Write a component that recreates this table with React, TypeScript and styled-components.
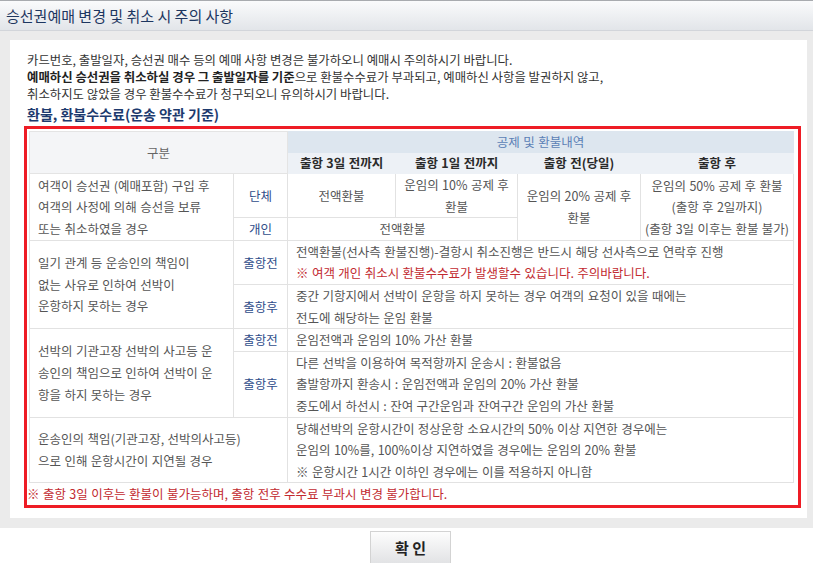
import React from "react";
import styled, { createGlobalStyle } from "styled-components";

const Global = createGlobalStyle`
  html, body { margin: 0; padding: 0; background: #ffffff; }
  body { font-family: "Noto Sans CJK KR", "Noto Sans", sans-serif; }
  * { box-sizing: border-box; }
`;

const Page = styled.div`
  width: 813px;
  height: 563px;
  overflow: hidden;
  display: flex;
  flex-direction: column;
  background: #ffffff;
`;

const Header = styled.header`
  height: 31px;
  flex: none;
  border-top: 1px solid #a8abaf;
  border-bottom: 1px solid #d2d5da;
  background: linear-gradient(#fafbfc, #e2e5e9);
  display: flex;
  align-items: center;
  padding-left: 6px;
`;

const Title = styled.h1`
  margin: 0;
  font-size: 15px;
  font-weight: 400;
  color: #1d3660;
  line-height: 20px;
`;

const Content = styled.div`
  background: #ebebeb;
  padding: 9px 6px 10px 10px;
  flex: none;
`;

const Panel = styled.section`
  background: #ffffff;
  padding: 12px 6px 10px 17px;
`;

const Para = styled.p`
  margin: 0;
  font-size: 12.4px;
  line-height: 17px;
  color: #333333;
`;

const Strong = styled.b`
  font-weight: 700;
  color: #222222;
`;

const SubHeading = styled.h2`
  margin: 2px 0 3px;
  font-size: 14px;
  line-height: 18px;
  font-weight: 700;
  color: #1d3a6e;
`;

const RedBox = styled.div`
  margin-left: -3px;
  border: 3px solid #ee1c25;
  padding: 2px 5px 0 2px;
`;

const Table = styled.table`
  width: 764px;
  border-collapse: collapse;
  table-layout: fixed;
  font-size: 12.5px;
  word-spacing: 0.6px;
  color: #555555;
`;

const Th = styled.th<{ $kind: "gubun" | "group" | "sub" }>`
  padding: 0;
  line-height: 20px;
  font-weight: ${(p) => (p.$kind === "sub" ? 700 : 400)};
  color: ${(p) =>
    p.$kind === "group" ? "#5b7fb6" : p.$kind === "sub" ? "#2a2a2a" : "#666666"};
  background: ${(p) =>
    p.$kind === "group" ? "#dde6ef" : p.$kind === "sub" ? "#edf1f6" : "#f4f5f7"};
  border: 1px solid
    ${(p) => (p.$kind === "gubun" ? "#e4e4e4" : p.$kind === "group" ? "#dde6ef" : "#edf1f6")};
  text-align: center;
`;

const Td = styled.td<{ $align?: "left" | "center" }>`
  padding: ${(p) => (p.$align === "left" ? "0 2px 0 8px" : "0")};
  line-height: 21.6px;
  border: 1px solid #e2e2e2;
  text-align: ${(p) => p.$align ?? "center"};
  vertical-align: middle;
  white-space: nowrap;
`;

const Label = styled.td`
  padding: 0;
  line-height: 21.6px;
  border: 1px solid #e2e2e2;
  text-align: center;
  color: #2f4d8a;
`;

const Red = styled.span`
  color: #c22a30;
`;

const Note = styled.div`
  font-size: 12.5px;
  word-spacing: 0.6px;
  line-height: 22px;
  color: #c22a30;
  margin-left: -2px;
`;

const Footer = styled.footer`
  flex: 1;
  background: #ffffff;
  display: flex;
  justify-content: center;
  padding: 3px 0 0 8px;
`;

const Button = styled.button`
  width: 81px;
  height: 34px;
  border: 1px solid #d3d3d3;
  background: linear-gradient(#fdfdfd, #e1e2e4);
  font-family: "Noto Sans CJK KR", sans-serif;
  font-size: 15px;
  font-weight: 700;
  color: #222222;
  padding: 0 0 2px;
  cursor: pointer;
`;

export default function App() {
  return (
    <>
      <Global />
      <Page>
        <Header>
          <Title>승선권예매 변경 및 취소 시 주의 사항</Title>
        </Header>
        <Content>
          <Panel>
            <Para>카드번호, 출발일자, 승선권 매수 등의 예매 사항 변경은 불가하오니 예매시 주의하시기 바랍니다.</Para>
            <Para>
              <Strong>예매하신 승선권을 취소하실 경우 그 출발일자를 기준</Strong>으로 환불수수료가 부과되고, 예매하신 사항을 발권하지 않고,
            </Para>
            <Para>취소하지도 않았을 경우 환불수수료가 청구되오니 유의하시기 바랍니다.</Para>
            <SubHeading>환불, 환불수수료(운송 약관 기준)</SubHeading>
            <RedBox>
              <Table>
                <colgroup>
                  <col style={{ width: 204 }} />
                  <col style={{ width: 54 }} />
                  <col style={{ width: 108 }} />
                  <col style={{ width: 122 }} />
                  <col style={{ width: 123 }} />
                  <col style={{ width: 153 }} />
                </colgroup>
                <thead>
                  <tr>
                    <Th $kind="gubun" rowSpan={2} colSpan={2}>구분</Th>
                    <Th $kind="group" colSpan={4}>공제 및 환불내역</Th>
                  </tr>
                  <tr>
                    <Th $kind="sub">출항 3일 전까지</Th>
                    <Th $kind="sub">출항 1일 전까지</Th>
                    <Th $kind="sub">출항 전(당일)</Th>
                    <Th $kind="sub">출항 후</Th>
                  </tr>
                </thead>
                <tbody>
                  <tr>
                    <Td $align="left" rowSpan={2}>
                      여객이 승선권 (예매포함) 구입 후<br />
                      여객의 사정에 의해 승선을 보류<br />
                      또는 취소하였을 경우
                    </Td>
                    <Label>단체</Label>
                    <Td>전액환불</Td>
                    <Td>
                      운임의 10% 공제 후<br />
                      환불
                    </Td>
                    <Td rowSpan={2}>
                      운임의 20% 공제 후<br />
                      환불
                    </Td>
                    <Td rowSpan={2}>
                      운임의 50% 공제 후 환불<br />
                      (출항 후 2일까지)<br />
                      (출항 3일 이후는 환불 불가)
                    </Td>
                  </tr>
                  <tr>
                    <Label>개인</Label>
                    <Td colSpan={2}>전액환불</Td>
                  </tr>
                  <tr>
                    <Td $align="left" rowSpan={2}>
                      일기 관계 등 운송인의 책임이<br />
                      없는 사유로 인하여 선박이<br />
                      운항하지 못하는 경우
                    </Td>
                    <Label>출항전</Label>
                    <Td $align="left" colSpan={4}>
                      전액환불(선사측 환불진행)-결항시 취소진행은 반드시 해당 선사측으로 연락후 진행<br />
                      <Red>※ 여객 개인 취소시 환불수수료가 발생할수 있습니다. 주의바랍니다.</Red>
                    </Td>
                  </tr>
                  <tr>
                    <Label>출항후</Label>
                    <Td $align="left" colSpan={4}>
                      중간 기항지에서 선박이 운항을 하지 못하는 경우 여객의 요청이 있을 때에는<br />
                      전도에 해당하는 운임 환불
                    </Td>
                  </tr>
                  <tr>
                    <Td $align="left" rowSpan={2}>
                      선박의 기관고장 선박의 사고등 운<br />
                      송인의 책임으로 인하여 선박이 운<br />
                      항을 하지 못하는 경우
                    </Td>
                    <Label>출항전</Label>
                    <Td $align="left" colSpan={4}>운임전액과 운임의 10% 가산 환불</Td>
                  </tr>
                  <tr>
                    <Label>출항후</Label>
                    <Td $align="left" colSpan={4}>
                      다른 선박을 이용하여 목적항까지 운송시 : 환불없음<br />
                      출발항까지 환송시 : 운임전액과 운임의 20% 가산 환불<br />
                      중도에서 하선시 : 잔여 구간운임과 잔여구간 운임의 가산 환불
                    </Td>
                  </tr>
                  <tr>
                    <Td $align="left" colSpan={2}>
                      운송인의 책임(기관고장, 선박의사고등)<br />
                      으로 인해 운항시간이 지연될 경우
                    </Td>
                    <Td $align="left" colSpan={4}>
                      당해선박의 운항시간이 정상운항 소요시간의 50% 이상 지연한 경우에는<br />
                      운임의 10%를, 100%이상 지연하였을 경우에는 운임의 20% 환불<br />
                      ※ 운항시간 1시간 이하인 경우에는 이를 적용하지 아니함
                    </Td>
                  </tr>
                </tbody>
              </Table>
              <Note>※ 출항 3일 이후는 환불이 불가능하며, 출항 전후 수수료 부과시 변경 불가합니다.</Note>
            </RedBox>
          </Panel>
        </Content>
        <Footer>
          <Button type="button">확 인</Button>
        </Footer>
      </Page>
    </>
  );
}
